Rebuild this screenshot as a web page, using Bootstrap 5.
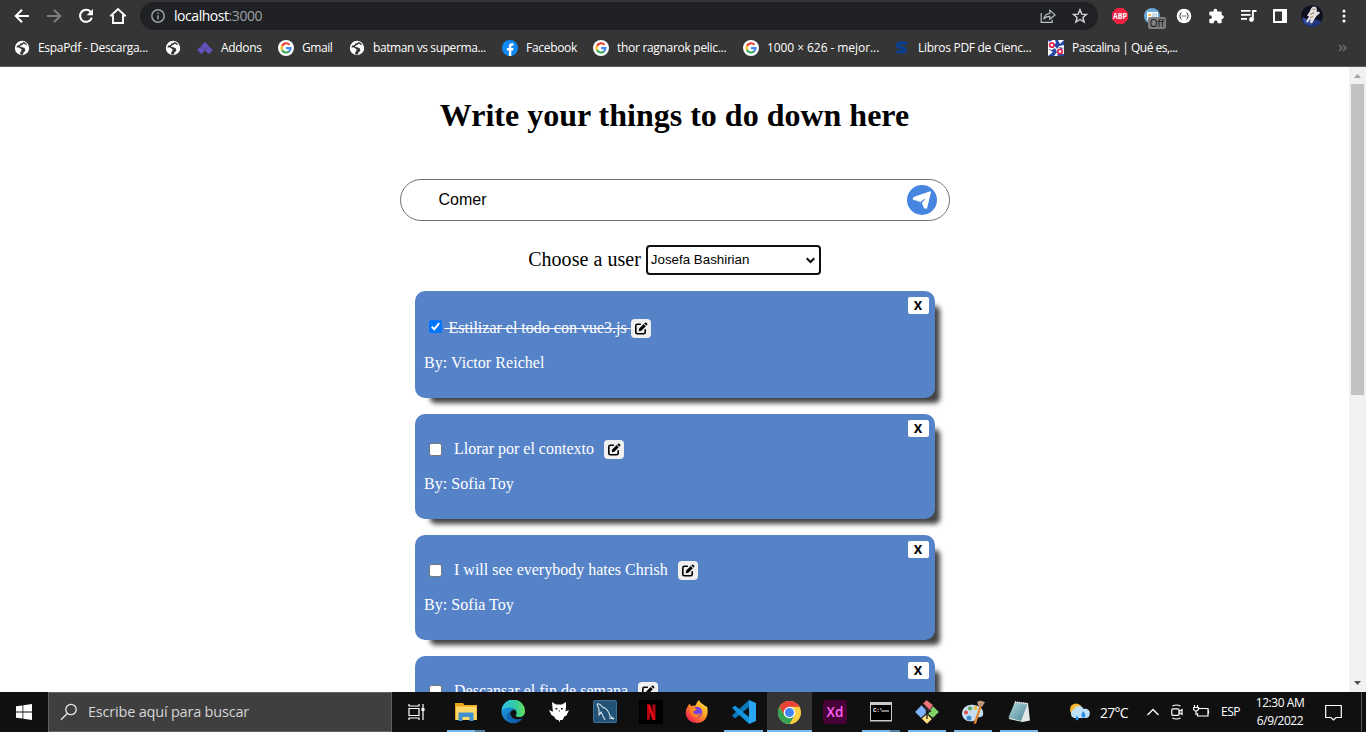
<!DOCTYPE html>
<html lang="en">
<head>
<meta charset="utf-8">
<meta name="viewport" content="width=device-width, initial-scale=1">
<title>Todo list</title>
<link href="https://cdn.jsdelivr.net/npm/bootstrap@5.3.0/dist/css/bootstrap.min.css" rel="stylesheet">
<style>
  body { width: 1366px; height: 732px; font-family: "Open Sans", "Noto Sans", sans-serif; color: #000; background: #fff; }
  svg { display: block; flex: none; }
  /* browser chrome */
  .chrome-top { height: 67px; background: #353535; border-bottom: 1px solid #5d5d5d; color: #fff; }
  .toolbar { height: 32px; }
  .slot { width: 32px; flex: none; display: flex; align-items: center; justify-content: center; }
  .omnibox { width: 958px; height: 28px; border-radius: 14px; background: #202124; margin-left: 6px; }
  .info { margin: 0 9px 0 11px; }
  .url { font-size: 14px; letter-spacing: -.45px; line-height: 28px; }
  .url span { color: #9aa0a6; }
  .bookmarks { height: 32px; font-size: 12px; padding-left: 14px; letter-spacing: -.3px; }
  .bm { flex: none; display: flex; align-items: center; gap: 8px; height: 32px; white-space: nowrap; }
  .off-badge { left: 12px; top: 12px; width: 18px; height: 12px; background: #7e7e7e; border-radius: 2px; color: #111; font-size: 10px; line-height: 12px; }
  /* page */
  .viewport { height: 625px; font-family: "Liberation Serif", serif; }
  .page-title { font-size: 32px; font-weight: 700; line-height: 37px; margin: 30px 0 45px; }
  .new-todo { width: 550px; height: 42px; border: 1px solid #767676; border-radius: 21px; padding: 0 12px 0 38px; font: 16px "Liberation Sans", sans-serif; }
  .send { width: 30px; height: 30px; border-radius: 50%; background: #4685e0; }
  .chooser { margin-top: 24px; height: 30px; font-size: 20px; gap: 5px; }
  .chooser-label { letter-spacing: .04px; margin-top: -2px; }
  .user-select { width: 175px; height: 30px; border: 2px solid #101010; border-radius: 4px; font: 13.33px "Liberation Sans", sans-serif; padding: 0 4px 2px 3px; }
  .todos { margin-top: 16px; gap: 16px; }
  .todo { width: 520px; height: 105px; flex: none; border-radius: 10px; background: #5683c8; color: #fff; box-shadow: 10px 10px 5px -5px #444; padding: 6px 6px 0 9px; font-size: 16px; line-height: 18px; }
  .todo.finished { height: 107px; }
  .del { width: 21px; height: 17px; border-radius: 2px; background: #fff; color: #000; font: bold 13.33px/17px Roboto, sans-serif; }
  .task { margin: 3px 0 0 5px; height: 19px; }
  .finished .task { margin-top: 5px; }
  .check { width: 13px; height: 13px; border-radius: 2.5px; background: #fff; border: 1px solid #767676; margin-right: 12.5px; }
  .finished .check { background: #0075ff; border: 0; margin: -4px 3px 0 0; }
  .what { margin-top: -2px; }
  .finished .what { text-decoration: line-through; white-space: pre; }
  .edit { width: 20px; height: 19px; border-radius: 4px; background: #efefef; margin-left: 10px; }
  .finished .edit { margin-left: 0; }
  .by { margin: 16px 0 0 .5px; letter-spacing: .05px; }
  .scroller { width: 17px; background: #f1f1f1; }
  .thumb { width: 13px; height: 311px; background: #c1c1c1; }
  /* taskbar */
  .taskbar { height: 40px; background: #101010; color: #fff; }
  .search { width: 344px; height: 40px; background: #3f3f3f; border: 1px solid #606060; color: #d6d6d6; font-size: 14.5px; letter-spacing: -.2px; padding-left: 11px; gap: 10px; }
  .app { width: 46px; height: 40px; flex: none; display: flex; align-items: center; justify-content: center; position: relative; }
  .app.open::after { content: ""; position: absolute; left: 4px; right: 4px; bottom: 0; height: 2px; background: #76b9ed; }
  .app.many::after { background: linear-gradient(90deg, #76b9ed 28px, #507f9f 28px); }
  .app.active { background: #343434; }
  .app.active::after { left: 0; right: 0; }
  .tray { font-size: 12px; }
  .tray > * { flex: none; }
  .clock { width: 60px; line-height: 18px; letter-spacing: -.45px; }
</style>
</head>
<body class="m-0 d-flex flex-column overflow-hidden">

<svg width="0" height="0" class="position-absolute">
  <symbol id="globe" viewBox="0 0 16 16"><circle cx="8" cy="8" r="7.2" fill="#fff"/><path d="M2.2 7.3 5 7.6 7.5 9.3 7.3 11.2 6 12.6 6.6 14.8 9 14.6 9.6 12.3 11.3 11 11 8.6 8.6 7.2 6.2 7 6.6 5.6 8.6 5 9.4 3.6 11.4 4.6 13.3 5.6 12 3.2 9.4 1.7 8.6 3 6.4 3.4 5.6 5 3.4 5.6z" fill="#353535"/></symbol>
  <symbol id="google" viewBox="0 0 16 16"><circle cx="8" cy="8" r="8" fill="#fff"/><g fill="none" stroke-width="2.1"><path d="M11.5 4.8A4.5 4.5 0 0 0 4 6" stroke="#ea4335"/><path d="M4 6a4.5 4.5 0 0 0 0 4.1" stroke="#fbbc05"/><path d="M4 10.1a4.5 4.5 0 0 0 7 1.3" stroke="#34a853"/><path d="M11 11.5A4.4 4.4 0 0 0 12.5 8.1H8.1" stroke="#4285f4"/></g></symbol>
  <symbol id="pen" viewBox="0 0 14 14"><path d="M6.300 2.300H3.400Q1.800 2.300 1.800 3.900v6.300Q1.800 11.800 3.400 11.800h6.200q1.600 0 1.600-1.600V7.900" fill="none" stroke="#000" stroke-width="1.600" stroke-linecap="round"/><path d="M4.700 9.200 5.200 6.600 9.700 2.100 11.800 4.200 7.300 8.700zM10.300 1.500 11 .8Q11.700.2 12.300.8L13.100 1.600Q13.700 2.300 13.100 3L12.400 3.600z" fill="#000"/></symbol>
</svg>

<header class="chrome-top flex-shrink-0">
  <div class="toolbar d-flex align-items-center">
    <div class="d-flex" style="padding-left:6px">
      <div class="slot"><svg width="16" height="16" fill="none" stroke="#fff" stroke-width="2"><path d="M15 8H2M8 1.7 1.7 8 8 14.3"/></svg></div>
      <div class="slot"><svg width="16" height="16" fill="none" stroke="#7d7d7d" stroke-width="2"><path d="M1 8h13M8 1.7 14.3 8 8 14.3"/></svg></div>
      <div class="slot"><svg width="16" height="16" fill="none"><path d="M13 4.4A6 6 0 1 0 13.8 9.6" stroke="#fff" stroke-width="2"/><path d="M15 1v6.3H8.7z" fill="#fff"/></svg></div>
      <div class="slot"><svg width="18" height="18" fill="none" stroke="#fff" stroke-width="1.9"><path d="M1.3 9.3 9 2l7.7 7.3M4 8v8h10V8"/></svg></div>
    </div>
    <div class="omnibox d-flex align-items-center">
      <svg class="info" width="14" height="14" fill="none" stroke="#9aa0a6" stroke-width="1.5"><circle cx="7" cy="7" r="6.2"/><path d="M7 6.3v4.2M7 3.4v1.6"/></svg>
      <div class="url flex-grow-1">localhost<span>:3000</span></div>
      <div class="slot"><svg width="16" height="16" fill="none" stroke="#bdc1c6" stroke-width="1.2"><path d="M1.200 5v9.400h11v-2.700M3.800 11.300c.5-4 2.800-5.600 6-5.800V2.300l5.200 4.600-5.200 4.400V8.400c-3 0-4.700.8-6 2.900z"/></svg></div>
      <div class="slot" style="margin-right:2px"><svg width="16" height="16" fill="none" stroke="#d5d7da" stroke-width="1.4"><path d="M8 1.700 9.800 6.100 14.500 6.400 10.900 9.400 12.100 14 8 11.500 3.900 14 5.100 9.400 1.500 6.400 6.200 6.100z"/></svg></div>
    </div>
    <div class="d-flex" style="padding-left:6px">
      <div class="slot"><svg width="16" height="16"><path d="M4.700 0h6.600L16 4.700v6.600L11.300 16H4.700L0 11.300V4.700z" fill="#ef2142"/><text x="1" y="10.800" font-size="8" font-weight="700" fill="#fff" textLength="14" lengthAdjust="spacingAndGlyphs">ABP</text></svg></div>
      <div class="slot position-relative"><svg width="16" height="16"><circle cx="8" cy="8" r="8" fill="#6aa9d8"/><rect x="3" y="4" width="11" height="8" fill="#fff"/><path d="M4.500 6h2.500v2H4.500z" fill="#f1b43c"/><path d="M8 6h5M8 8h5M4.500 10H12" stroke="#90bde0"/></svg><span class="off-badge position-absolute text-center">Off</span></div>
      <div class="slot"><svg width="16" height="16"><circle cx="8" cy="8" r="7.300" fill="#fff"/><path d="M5.500 4.700Q4 5 4.300 7L3.500 8l.8 1q-.3 2 1.200 2.300M10.500 4.700Q12 5 11.700 7l.8 1-.8 1q.3 2-1.200 2.300" fill="none" stroke="#333"/><path d="M6 8h4" stroke="#333" stroke-dasharray="1 .5"/></svg></div>
      <div class="slot"><svg width="16" height="16" fill="#fff"><path d="M2.300 3.400H5.500V2.600a1.900 1.900 0 0 1 3.800 0v.8h3.400q1 0 1 1v2.900h.4a1.800 1.800 0 0 1 0 3.600h-.4v3.300q0 1-1 1H9.600v-.7a1.900 1.900 0 0 0-3.800 0v.7H2.300q-1 0-1-1V11H2a1.900 1.900 0 0 0 0-3.800h-.7V4.400q0-1 1-1z"/></svg></div>
      <div class="slot"><svg width="17" height="14" fill="#fff"><path d="M1 1h9.500v1.800H1zM1 5h9.500v1.800H1zM1 9h6v1.800H1zM12 1h4.500v2h-2.700v7.500h-2z"/><circle cx="11.500" cy="10.500" r="2.400"/></svg></div>
      <div class="slot"><svg width="14" height="14"><path d="M0 0h14v14H0z" fill="#fff"/><path d="M2 2.500h7v9.500H2z" fill="#353535"/></svg></div>
      <div class="slot"><svg width="22" height="22"><clipPath id="av"><circle cx="11" cy="11" r="10.800"/></clipPath><g clip-path="url(#av)"><path d="M0 0h22v22H0z" fill="#0c1020"/><path d="M0 15Q9 11 22 17v5H0z" fill="#22377f"/><path d="M1 12l7 3 2 5-6-1z" fill="#334c9b"/><path d="M10 3.500 12 1.500 15 2 16 5 15.500 7 18 6.500 19 8 15.500 11 13.500 14 11 18.500 9 17.500 9.500 14 6.500 17.500 5 16.500 8 11.500 6 10.500 8.500 7z" fill="#e5e0df"/><path d="M11.500 4 14.500 4.500M9.500 9.500l3.500-2M9 12.500l3-1" stroke="#a2816e" stroke-width="1.200"/></g></svg></div>
      <div class="slot"><svg width="4" height="14" fill="#fff"><circle cx="2" cy="2" r="1.500"/><circle cx="2" cy="7" r="1.500"/><circle cx="2" cy="12" r="1.500"/></svg></div>
    </div>
  </div>
  <nav class="bookmarks d-flex">
    <div class="bm" style="width:151px"><svg width="16" height="16"><use href="#globe"/></svg>EspaPdf - Descarga...</div>
    <div class="bm" style="width:32px"><svg width="16" height="16"><use href="#globe"/></svg></div>
    <div class="bm" style="width:81px"><svg width="16" height="16"><path d="M8 2 12 6 8 10 4 6z" fill="#6554c0"/><path d="M4 6.500 8 10.500 5 13.500H3.700L0 10zM12 6.500 8 10.500 11 13.500h1.300L16 10z" fill="#6554c0"/></svg>Addons</div>
    <div class="bm" style="width:71px;letter-spacing:-.45px"><svg width="16" height="16"><use href="#google"/></svg>Gmail</div>
    <div class="bm" style="width:153px;letter-spacing:-.4px"><svg width="16" height="16"><use href="#globe"/></svg>batman vs superma...</div>
    <div class="bm" style="width:91px"><svg width="16" height="16"><circle cx="8" cy="8" r="8" fill="#1089f5"/><path d="M6.900 16v-5.500H4.900V8.100h2V6.500c0-2.100 1.200-3.200 3-3.200l1.700.1v2h-1.100c-.9 0-1.200.6-1.200 1.200v1.500h2.200l-.4 2.400H9.300V16z" fill="#fff"/></svg>Facebook</div>
    <div class="bm" style="width:150px"><svg width="16" height="16"><use href="#google"/></svg>thor ragnarok pelic...</div>
    <div class="bm" style="width:151px;letter-spacing:-.07px"><svg width="16" height="16"><use href="#google"/></svg>1000 × 626 - mejor...</div>
    <div class="bm" style="width:154px"><svg width="16" height="16"><path d="M13 4.200C12 3 5 1.800 3.600 4.700c-1.300 3.200 8.300 2.600 7.700 5.300C10.500 13 4.500 12 2.600 10.900" fill="none" stroke="#0b3f91" stroke-width="3.300"/></svg>Libros PDF de Cienc...</div>
    <div class="bm flex-grow-1" style="letter-spacing:-.5px"><svg width="16" height="16"><path d="M0 0h16v16H0z" fill="#fff"/><path d="M0 0h5L1 2zM7 0h3l2 4 4-4v5l-5 1-2 3-3-4 2-2zM0 9l4 1 3-2 2 4-3 4H0l5-4zM10 7l6 1-3 1zM9 14l7 0v2h-6z" fill="#2846a5"/><circle cx="3.800" cy="5" r="2.200" fill="#fff" stroke="#e0284f" stroke-width="1.800"/><circle cx="12" cy="11.500" r="2.200" fill="#fff" stroke="#e0284f" stroke-width="1.800"/></svg>Pascalina | Qué es,...</div>
    <svg class="align-self-center" style="margin-right:18px" width="10" height="8" fill="none" stroke="#6b6f73" stroke-width="1.500"><path d="M1 1l3 3-3 3M5 1l3 3-3 3"/></svg>
  </nav>
</header>

<div class="viewport d-flex flex-shrink-0 overflow-hidden">
  <main class="flex-grow-1 d-flex flex-column align-items-center overflow-hidden">
    <h1 class="page-title">Write your things to do down here</h1>
    <div class="new-todo d-flex align-items-center justify-content-between flex-shrink-0">
      <span>Comer</span>
      <div class="send d-flex align-items-center justify-content-center"><svg width="20" height="20" fill="#fff"><path d="M18.300 1.200Q19.300 1.200 19 2.300L15.200 17.800Q14.800 19 13.600 18.700L11.800 18Q11.200 15 9.800 13.300L13.200 9.100Q13.700 8.200 12.800 8.700L8.300 12.100Q5 10.500 1 9.800.2 8.500 1.500 7.300 2 6.900 3 6.500z"/></svg></div>
    </div>
    <div class="chooser d-flex align-items-center flex-shrink-0">
      <span class="chooser-label">Choose a user</span>
      <div class="user-select d-flex align-items-center justify-content-between bg-white"><span>Josefa Bashirian</span><svg style="margin-top:2px" width="9" height="7" fill="none" stroke="#101010" stroke-width="2"><path d="M.7 1.200 4.500 5l3.800-3.800"/></svg></div>
    </div>
    <section class="todos d-flex flex-column">
      <article class="todo finished">
        <div class="del text-center ms-auto">X</div>
        <div class="task d-flex align-items-center"><span class="check"><svg width="13" height="13" fill="none" stroke="#fff" stroke-width="2"><path d="M2.800 6.800 5.300 9.300 10.200 3.200"/></svg></span><span class="what"> Estilizar el todo con vue3.js </span><span class="edit d-flex align-items-center justify-content-center"><svg width="14" height="14"><use href="#pen"/></svg></span></div>
        <div class="by">By: Victor Reichel</div>
      </article>
      <article class="todo">
        <div class="del text-center ms-auto">X</div>
        <div class="task d-flex align-items-center"><span class="check"></span><span class="what">Llorar por el contexto</span><span class="edit d-flex align-items-center justify-content-center"><svg width="14" height="14"><use href="#pen"/></svg></span></div>
        <div class="by">By: Sofia Toy</div>
      </article>
      <article class="todo">
        <div class="del text-center ms-auto">X</div>
        <div class="task d-flex align-items-center"><span class="check"></span><span class="what">I will see everybody hates Chrish</span><span class="edit d-flex align-items-center justify-content-center"><svg width="14" height="14"><use href="#pen"/></svg></span></div>
        <div class="by">By: Sofia Toy</div>
      </article>
      <article class="todo">
        <div class="del text-center ms-auto">X</div>
        <div class="task d-flex align-items-center"><span class="check"></span><span class="what">Descansar el fin de semana</span><span class="edit d-flex align-items-center justify-content-center"><svg width="14" height="14"><use href="#pen"/></svg></span></div>
      </article>
    </section>
  </main>
  <div class="scroller d-flex flex-column align-items-center flex-shrink-0">
    <svg width="17" height="17"><path d="M5 11h7L8.500 7z" fill="#a3a3a3"/></svg>
    <div class="thumb"></div>
    <svg class="mt-auto" width="17" height="17"><path d="M5 6h7l-3.500 4z" fill="#505050"/></svg>
  </div>
</div>

<footer class="taskbar d-flex flex-shrink-0 align-items-center">
  <div class="d-flex justify-content-center flex-shrink-0" style="width:48px"><svg width="16" height="16" fill="#fff"><path d="M0 2.300 6.500 1.400V7.600H0zM7.300 1.300 16 0v7.600H7.300zM0 8.400h6.500v6.200L0 13.700zM7.300 8.400H16V16L7.300 14.700z"/></svg></div>
  <div class="search d-flex align-items-center flex-shrink-0"><svg width="18" height="18" fill="none" stroke="#e8e8e8" stroke-width="1.300"><circle cx="11" cy="6.500" r="5.200"/><path d="M7.300 10.500 1 16.800"/></svg><span>Escribe aquí para buscar</span></div>
  <div class="d-flex justify-content-center flex-shrink-0" style="width:48px"><svg width="17" height="16" fill="none" stroke="#fff" stroke-width="1.200"><path d="M1 4.500h10v7H1zM1 0v2h10V0M1 16v-2h10v2M15 0v16"/><path d="M13.500 4h3v3h-3z" fill="#fff" stroke="none"/></svg></div>
  <div class="d-flex" style="margin-left:3px">
    <div class="app open many"><svg width="22" height="20"><path d="M0 1h8l1.500 2H22v15H0z" fill="#e8a51c"/><path d="M1 4.500h20.500V18H1z" fill="#ffd767"/><path d="M4.500 10.500h13q1 0 1 1V19h-4v-4h-7v4h-4v-7.500q0-1 1-1z" fill="#4091cf"/></svg></div>
    <div class="app" style="width:47px"><svg width="24" height="24"><defs><linearGradient id="ed1" x2="1"><stop stop-color="#2fc0ee"/><stop offset=".6" stop-color="#32cba0"/><stop offset="1" stop-color="#66df55"/></linearGradient><linearGradient id="ed2" x2="1" y2="1"><stop stop-color="#1e9de0"/><stop offset="1" stop-color="#0b4c9b"/></linearGradient></defs><path d="M.5 11A11.700 11.700 0 0 1 24 11.500c0 3.500-2.500 5.500-5.700 5.500-2.700 0-4-1-3.500-2 .5-.9.8-1.400.8-2.500C15 9 10 6 .5 11z" fill="url(#ed1)"/><path d="M.3 11.500C3 6.500 11 6 14.500 10.500 11 9 8.500 12 9.500 15c1.200 4 6.500 5.500 12.500 3.300A12 12 0 0 1 .3 11.500z" fill="url(#ed2)"/><path d="M9.200 12.500c-2.500 5 4 9 11 6.700-5 3.500-14 3-14.200-3.500 0-2 1.200-3.500 3.200-3.200z" fill="#1060ad"/></svg></div>
    <div class="app"><svg width="22" height="22" fill="#fff"><path d="M4 1 8 3.500h6L18 1v5.500l-.5 4L21 9l-2.500 5.500-2 .8-2 3.700H12v2.500L10.500 19 8 18.500 6 15.500 3.500 14 1 9l4 1.700L4.500 7z"/><path d="M7.500 7h1.800v1.500H7.500zM13 7h1.800v1.500H13zM10.500 9.500h1.500l-.8 1.500z" fill="#101010"/></svg></div>
    <div class="app"><svg width="24" height="24"><rect width="24" height="23" rx="2" fill="#225377"/><rect x=".5" y=".5" width="23" height="22" rx="2" fill="none" stroke="#3e7196"/><path d="M4 4c2-1 4 1 5.500 3C13 8 16 12 17 16l4 3-5-1M4 4l2 5v6l2-3 4 8M9.500 7 11 8" fill="none" stroke="#d5e2ea" stroke-width="1.100"/></svg></div>
    <div class="app"><svg width="24" height="24"><path d="M0 0h24v24H0z" fill="#000"/><path d="M8 4.500h3v15.100L8 20zM13.500 4.500h3V20l-3-.4z" fill="#b1060f"/><path d="M8 4.500h3L16.500 20l-3-.4z" fill="#e50914"/></svg></div>
    <div class="app"><svg width="24" height="24"><defs><linearGradient id="ff" x1="1" x2=".1" y2="1"><stop stop-color="#fff44f"/><stop offset=".45" stop-color="#ff9a20"/><stop offset=".9" stop-color="#f3254f"/></linearGradient></defs><path d="M4.500 3.500 6 6l4.500-.5C12 2 13 1 14 0c1 3 4.500 4 6 6l2 .5c2.300 8-1.300 16.500-10 16.500C5 23 0 18 .8 11.500 1.200 8 2.500 7 4.500 3.500z" fill="url(#ff)"/><circle cx="12" cy="12" r="5.200" fill="#7542e5"/><path d="M5 8c3-1 5 0 7 1.500C10.500 11 9 10.500 8 12c1 3 5 3 8 1-2 7-12 5-11-5z" fill="#ff831e"/></svg></div>
    <div class="app open" style="width:47px"><svg width="24" height="24"><path d="M17 0 24 3v18l-7 3z" fill="#2aa6f2"/><path d="M0 15.500 17 0v7L3 18.500z" fill="#0877bc"/><path d="M0 8 3 5.500 17 17v7z" fill="#1492de"/></svg></div>
    <div class="app open active" style="width:45px"><svg width="23" height="23" viewBox="0 0 24 24"><circle cx="12" cy="12" r="12" fill="#ffcd40"/><path d="M1.600 6A12 12 0 0 1 22.400 6H12L6.800 15z" fill="#e94235"/><path d="M1.600 6A12 12 0 0 0 12 24L17.200 15H6.800z" fill="#34a353"/><circle cx="12" cy="12" r="6" fill="#fff"/><circle cx="12" cy="12" r="4.700" fill="#4285f4"/></svg></div>
    <div class="app"><svg width="24" height="24"><rect width="24" height="24" rx="4" fill="#470137"/><text x="12" y="16.500" font-size="13.500" font-weight="600" text-anchor="middle" fill="#ff61f6">Xd</text></svg></div>
    <div class="app open many"><svg width="24" height="20"><path d="M1 0h22v19.500H1z" fill="#c6cbd0"/><path d="M2 3h20v15H2z" fill="#000"/><text x="4" y="10" font-family="Liberation Mono" font-weight="700" font-size="6" fill="#fff" textLength="10">C:\</text><path d="M14 9h6" stroke="#fff"/></svg></div>
    <div class="app open"><svg width="24" height="24"><g stroke="#333" stroke-width=".5"><path d="M8 3.500 11.500 0 18 5l-3.500 6.500L12 10z" fill="#f2757a"/><path d="M0 12 6.500 5 11 10v3.500L6 18z" fill="#80b3ff"/><path d="M18 6l6 6-6 6-5-4 1.500-2.500z" fill="#80d365"/><path d="M6.500 18.500 12 14l5 5-5 5z" fill="#ffe080"/></g><path d="M8 4 12 8v11M12 8l4 4" fill="none" stroke="#222" stroke-width="1.300"/></svg></div>
    <div class="app open"><svg width="24" height="24"><path d="M1 14C1 7 7 3.500 13 5c7 1 10 5 9 10-1 3-4 1.500-6 3-2 5-14 5-15-4z" fill="#c5dff0"/><circle cx="5" cy="12.500" r="2" fill="#e34b42"/><circle cx="9" cy="8.500" r="2" fill="#60a34f"/><circle cx="14.500" cy="8" r="2" fill="#e3be3e"/><circle cx="8" cy="18" r="2.500" fill="#3f8bd0"/><path d="m12.500 23.500 6-17.500 2 .8-5.500 17z" fill="#e2892e"/><path d="M17.500 6 16 2l3-1.500L24 2l-3 5z" fill="#bd9878"/></svg></div>
    <div class="app open"><svg width="24" height="24"><defs><linearGradient id="np" x2="1" y2="1"><stop stop-color="#b7dde2"/><stop offset="1" stop-color="#458291"/></linearGradient></defs><path d="M8 2 21 3l2 17.500L15.500 22 2 19z" fill="#e4e8e9"/><path d="M8 2 20.500 4 14 21 1.500 17.500z" fill="url(#np)"/><path d="M8 2 20.500 4" stroke="#ddd" stroke-width="2" stroke-dasharray="1 1"/></svg></div>
  </div>
  <div class="tray d-flex align-items-center" style="padding-left:27px">
    <svg width="22" height="18"><circle cx="7" cy="6.500" r="6" fill="#f9b934"/><path d="M5 15a4.500 4.500 0 0 1 0-8.500C7 2 13 2 14.500 6 19 5 21 8 20.800 10.500c0 3-1.800 4.500-4 4.500z" fill="#bfe0fb"/><path d="M14 8q4 4.500 1.500 6.500Q13.500 15.500 12.500 13 12 11 14 8zM8 12.500q2.500 3 1 4.500-2 1-2.500-1 0-1.500 1.500-3.500z" fill="#2e8ee6"/></svg>
    <span style="margin-left:9px;width:53px;font-size:14px;letter-spacing:-.75px">27°C</span>
    <svg style="margin-left:-6px" width="12" height="8" fill="none" stroke="#fff" stroke-width="1.300"><path d="M.5 7 6 1.500 11.500 7"/></svg>
    <svg style="margin-left:12px" width="12" height="16" fill="none" stroke="#fff" stroke-width="1.200"><rect x=".8" y="4.800" width="7.200" height="6.500" rx="1"/><path d="M8 7.500 11 5.500v5L8 8.500M1.500 2q4-2 8 0M1.500 14q4 2 8 0"/></svg>
    <svg style="margin-left:10px" width="17" height="14" fill="none" stroke="#fff" stroke-width="1.200"><path d="M6 3.500h9V11H4.500V8M15.500 5.500v3M1.500 0v2.500M4.500 0v2.500M.5 2.500h5v2l-2.500 2-2.500-2zM3 6v4"/></svg>
    <span style="margin-left:11px;width:29px;letter-spacing:-.5px">ESP</span>
    <div class="clock text-center"><div>12:30 AM</div><div>6/9/2022</div></div>
    <svg style="margin-left:15px" width="17" height="17" fill="none" stroke="#fff" stroke-width="1.200"><path d="M.7 1.500h15.600v12H11l-2.500 2.500L6 13.500H.7z"/></svg>
  </div>
  <div class="ms-auto" style="width:5px;height:40px;border-left:1px solid #555"></div>
</footer>
<script src="https://cdn.jsdelivr.net/npm/bootstrap@5.3.0/dist/js/bootstrap.bundle.min.js"></script>
</body>
</html>
